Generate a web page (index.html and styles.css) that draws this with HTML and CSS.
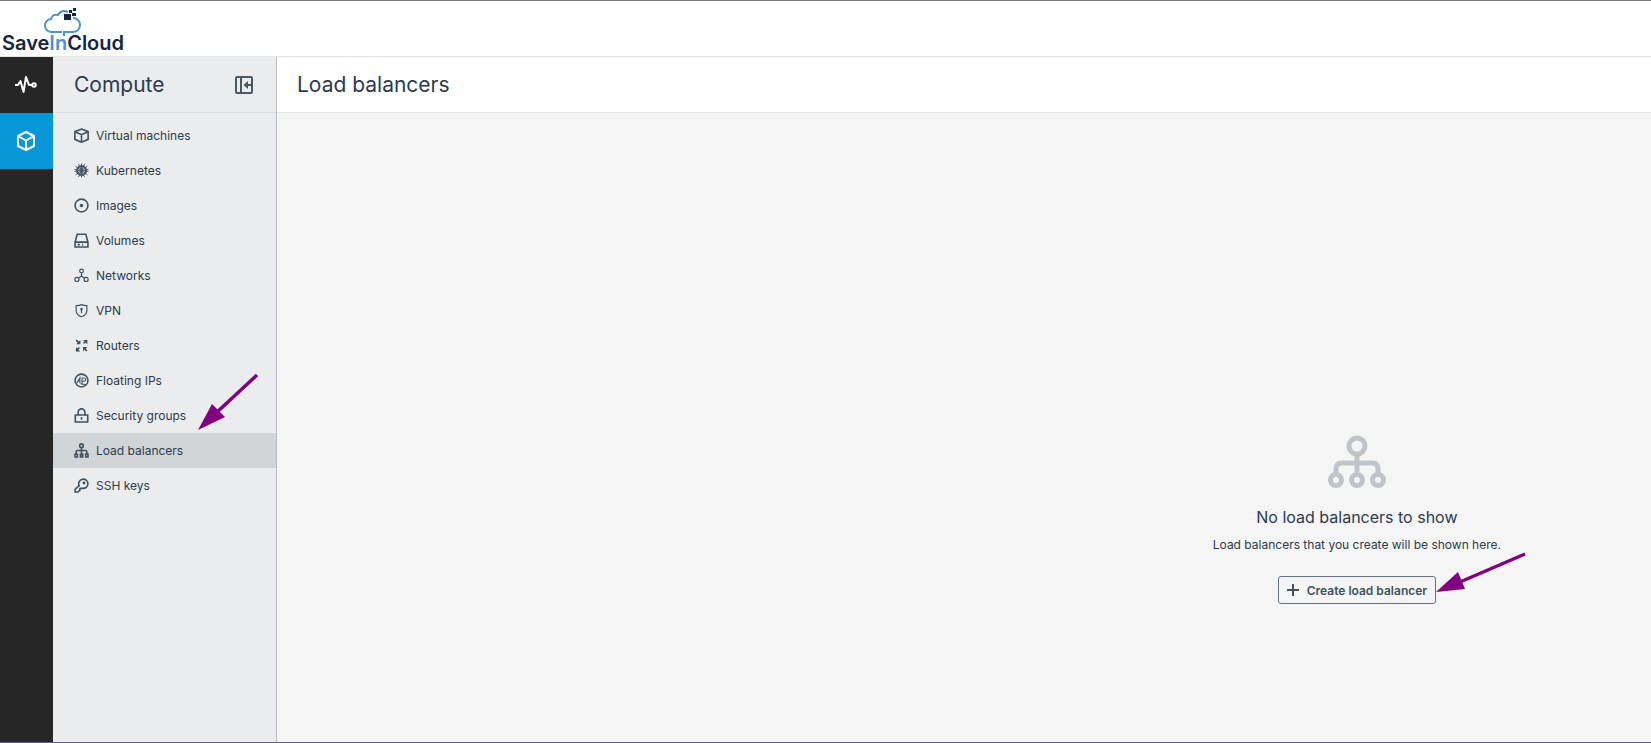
FILE: index.html
```html
<!DOCTYPE html>
<html lang="en">
<head>
    <meta charset="utf-8">
    <title>Load balancers</title>
    <link rel="stylesheet" href="styles.css">
</head>
<body>
    <header class="topbar">
        <a class="logo" href="#">
            <svg class="logo-cloud" viewBox="0 0 38 30">
                <path d="M18 25H8a6.500 6.500 0 0 1-1-13c1-4 4-5 7-4 2-4 6-5 10-3M29 11c4 0 7 3 7 7s-3 7-7 7h-9v4" fill="none" stroke="#4f93d1" stroke-width="2"/>
                <path d="M20 7h7v6h-7zM25 3h3v3h-3zM29 1h3v3h-3zM28 6h4v3h-4z" fill="#12263f"/>
            </svg>
            <span class="logo-text">Save<span class="logo-in">In</span>Cloud</span>
        </a>
    </header>
    <div class="layout">
        <nav class="rail" aria-label="Services">
            <a class="rail-item" href="#" aria-label="Monitoring">
                <svg width="22" height="20" viewBox="0 0 22 20" fill="none" stroke="#fff" stroke-width="2" stroke-linejoin="round">
                    <path d="M0 10h3l2.500-4 3 11 2.500-15 3 8h3"/>
                    <circle cx="19" cy="10" r="1.800"/>
                </svg>
            </a>
            <a class="rail-item rail-active" href="#" aria-label="Compute">
                <svg width="20" height="20" viewBox="0 0 20 20" fill="none" stroke="#fff" stroke-width="2" stroke-linejoin="round">
                    <path d="M10 1l8 4v10l-8 4-8-4V5zM2 5l8 4.500L18 5M10 9.500V19"/>
                </svg>
            </a>
        </nav>
        <aside class="sidebar">
            <div class="sidebar-header">
                <h2>Compute</h2>
                <button class="collapse" type="button" aria-label="Collapse menu">
                    <svg width="18" height="18" viewBox="0 0 18 18" fill="none" stroke="#485966" stroke-width="2">
                        <rect x="1" y="1" width="16" height="16" rx="1"/>
                        <path d="M6 1v16M16 9h-5"/>
                        <path d="M13 5v8L8.500 9z" fill="#485966" stroke="none"/>
                    </svg>
                </button>
            </div>
            <ul class="menu">
                <li><a href="#">
                    <svg viewBox="0 0 14 14"><path d="M7 1l6.200 2.400v7.200L7 13.200.8 10.600V3.400zM.8 3.400L7 6.200l6.200-2.800M7 6v7"/></svg>
                    Virtual machines</a></li>
                <li><a href="#">
                    <svg viewBox="0 0 14 14"><circle cx="7" cy="7" r="4.200" stroke-width="1.700"/><path d="M7 .5v13M1.500 3l11 8M12.500 3l-11 8M.5 8l13-2M.5 6l13 2M4.200 13l5.600-12M9.800 13L4.200 1" stroke-width=".9"/></svg>
                    Kubernetes</a></li>
                <li><a href="#">
                    <svg viewBox="0 0 14 14"><circle cx="7" cy="7" r="6"/><circle cx="7" cy="7" r=".9" fill="#41525f"/></svg>
                    Images</a></li>
                <li><a href="#">
                    <svg viewBox="0 0 14 14"><path d="M1 8.500L3 1.200h8l2 7.300V13H1zM1 8.500h12M3.500 10.800h2M7.500 10.800h1"/></svg>
                    Volumes</a></li>
                <li><a href="#">
                    <svg class="thin" viewBox="0 0 14 14"><circle cx="7" cy="2.800" r="1.700"/><circle cx="2.700" cy="10.700" r="1.900"/><circle cx="11.300" cy="10.700" r="1.900"/><path d="M7 4.500v3L4 9.500M7 7.500l3 2"/></svg>
                    Networks</a></li>
                <li><a href="#">
                    <svg class="thin" viewBox="0 0 14 14"><path d="M7 1.500c1.500.7 3.500.9 5 .9V7c0 3-2 4.800-5 5.800C4 11.800 2 10 2 7V2.400c1.500 0 3.500-.2 5-.9z"/><path d="M7 5v4.500"/><circle cx="7" cy="5.500" r=".6"/></svg>
                    VPN</a></li>
                <li><a href="#">
                    <svg viewBox="0 0 14 14"><path d="M2 2l3 3M9 5l3-3M5 9l-3 3M12 12L9 9"/><path d="M2 5.800h4v-4zM8.500 1.800h4v4zM1.800 8.500v4h4zM8.500 12.500v-4h4z" fill="#41525f" stroke="none"/></svg>
                    Routers</a></li>
                <li><a href="#">
                    <svg viewBox="0 0 14 14"><circle cx="7" cy="7" r="6"/><path d="M2.500 9.500L5.500 4.500v5M7.500 10V4.700h1.800a1.500 1.500 0 0 1 0 3H7.500M3 7.500h2.500M6 10l5 1" stroke-width="1"/></svg>
                    Floating IPs</a></li>
                <li><a href="#">
                    <svg viewBox="0 0 14 14"><path d="M1.200 6.500h11.600V13H1.200zM3.800 6.500V4a3.200 3.200 0 0 1 6.400 0v2.500M7 8.500v2.500"/></svg>
                    Security groups</a></li>
                <li class="active"><a href="#">
                    <svg viewBox="0 0 14 14"><circle cx="7" cy="2.500" r="1.700"/><path d="M7 4v8M2 11V8.500C2 7.500 2.500 7 3.500 7h7c1 0 1.500.5 1.500 1.500V11"/><path d="M1 10.500h2.200V13H1zM6 10.500h2.200V13H6zM10.900 10.500h2.200V13h-2.200z"/></svg>
                    Load balancers</a>
                    <svg class="arrow arrow-menu" viewBox="0 0 62 58">
                        <path d="M60 2L18 41" stroke="#800080" stroke-width="3.500"/>
                        <path d="M1 57L15 31l13 13z" fill="#800080"/>
                    </svg>
                </li>
                <li><a href="#">
                    <svg viewBox="0 0 14 14"><path d="M4.800 7.200A4.300 4.300 0 1 1 7.500 9.500L5.500 10v1.500L3.500 13H1v-2.500z"/><circle cx="9.300" cy="4.700" r=".6" fill="#41525f"/></svg>
                    SSH keys</a></li>
            </ul>
        </aside>
        <main class="content">
            <div class="content-header">
                <h1>Load balancers</h1>
            </div>
            <section class="empty">
                <svg class="empty-icon" viewBox="0 0 58 54" fill="none" stroke="#c0c4c9">
                    <circle cx="29" cy="11" r="8" stroke-width="5"/>
                    <path d="M29 20v17M8 38v-4q0-6 6-6h30q6 0 6 6v4" stroke-width="5"/>
                    <circle cx="8" cy="45" r="5.500" stroke-width="5"/>
                    <circle cx="29" cy="45" r="5.500" stroke-width="5"/>
                    <circle cx="50" cy="45" r="5.500" stroke-width="5"/>
                </svg>
                <h3>No load balancers to show</h3>
                <p>Load balancers that you create will be shown here.</p>
                <div class="action">
                    <button class="create" type="button">
                        <svg width="12" height="12" viewBox="0 0 12 12" stroke="#41525f" stroke-width="2"><path d="M6 0v12M0 6h12"/></svg>
                        Create load balancer
                    </button>
                    <svg class="arrow arrow-create" viewBox="0 0 90 42">
                        <path d="M89 2L24 30" stroke="#800080" stroke-width="3.500"/>
                        <path d="M0 40l22-20 7 17z" fill="#800080"/>
                    </svg>
                </div>
            </section>
        </main>
    </div>
</body>
</html>
```
FILE: styles.css
```css
* {
    box-sizing: border-box;
}

body {
    margin: 0;
    min-height: 100vh;
    display: flex;
    flex-direction: column;
    font-family: Inter, "Liberation Sans", sans-serif;
    font-size: 12px;
    color: #2b3b4e;
    background-color: #f5f5f5;
    border-top: 1px solid #77777b;
    border-bottom: 1px solid #5c5c94;
}

h1, h2, h3, p, ul {
    margin: 0;
    padding: 0;
    font-weight: 400;
}

a {
    color: inherit;
    text-decoration: none;
}

.topbar {
    height: 56px;
    padding: 6px 2px 0;
    background-color: #fff;
    border-bottom: 1px solid #e3e4e6;
}

.logo {
    display: inline-flex;
    flex-direction: column;
    align-items: center;
    color: #12263f;
}

.logo-cloud {
    width: 40px;
    height: 30px;
}

.logo-text {
    margin-top: -4px;
    font-size: 20px;
    font-weight: 600;
    line-height: 20px;
}

.logo-in {
    color: #4f93d1;
}

.layout {
    flex: 1;
    display: flex;
}

.rail {
    width: 53px;
    background-color: #262626;
}

.rail-item {
    display: flex;
    align-items: center;
    justify-content: center;
    height: 56px;
    padding-right: 2px;
}

.rail-active {
    background-color: #0797d9;
}

.sidebar {
    width: 224px;
    background-color: #ebeced;
    border-right: 1px solid #b9bdc5;
}

.sidebar-header {
    display: flex;
    align-items: center;
    justify-content: space-between;
    height: 56px;
    padding: 0 23px 0 21px;
    border-bottom: 1px solid #dcdde0;
}

h1, h2 {
    font-size: 21px;
}

.collapse {
    display: flex;
    padding: 0;
    border: none;
    background: none;
    cursor: pointer;
}

.menu {
    padding-top: 5px;
    list-style: none;
}

.menu li {
    position: relative;
}

.menu a {
    display: flex;
    align-items: center;
    gap: 7px;
    height: 35px;
    padding: 0 21px;
}

.menu a svg {
    width: 15px;
    height: 15px;
    fill: none;
    stroke: #41525f;
    stroke-width: 1.5px;
}

.menu a .thin {
    stroke-width: 1.1px;
}

.active {
    background-color: #d1d5d8;
}

.content {
    flex: 1;
}

.content-header {
    display: flex;
    align-items: center;
    height: 56px;
    padding: 0 20px;
    background-color: #fff;
    border-bottom: 1px solid #e6e7e8;
}

.empty {
    display: flex;
    flex-direction: column;
    align-items: center;
    width: fit-content;
    margin: 322px 150px 0 auto;
}

.empty-icon {
    width: 58px;
    height: 54px;
}

.empty h3 {
    margin-top: 17px;
    font-size: 16px;
    line-height: 22px;
}

.empty p {
    margin-top: 8px;
    line-height: 18px;
}

.action {
    position: relative;
    margin-top: 22px;
}

.create {
    display: flex;
    align-items: center;
    gap: 8px;
    height: 28px;
    padding: 0 8px;
    border: 1px solid #66737e;
    border-radius: 3px;
    background: none;
    color: #41525f;
    font-family: inherit;
    font-size: 12px;
    font-weight: 600;
    cursor: pointer;
}

/* Pointer arrows drawn over the page */
.arrow {
    position: absolute;
    pointer-events: none;
}

.arrow-menu {
    left: 144px;
    bottom: 37px;
    width: 62px;
    height: 58px;
}

.arrow-create {
    left: 100%;
    bottom: 10px;
    width: 90px;
    height: 42px;
}
```
